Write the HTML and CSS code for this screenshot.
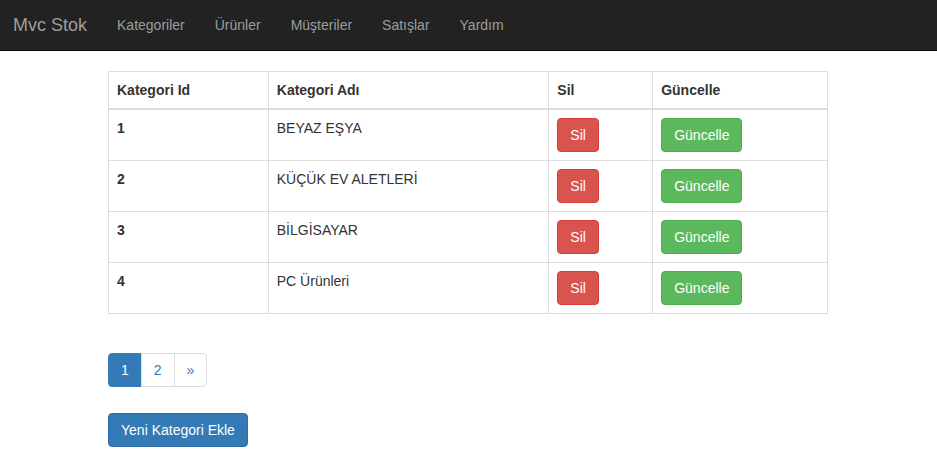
FILE: index.html
```html
<!DOCTYPE html>
<html lang="tr">
<head>
<meta charset="utf-8">
<title>Mvc Stok</title>
<link rel="stylesheet" href="styles.css">
</head>
<body>
<nav class="navbar">
  <a class="brand" href="#">Mvc Stok</a>
  <ul class="nav">
    <li><a href="#">Kategoriler</a></li>
    <li><a href="#">Ürünler</a></li>
    <li><a href="#">Müşteriler</a></li>
    <li><a href="#">Satışlar</a></li>
    <li><a href="#">Yardım</a></li>
  </ul>
</nav>
<main class="container">
  <table class="table">
    <thead>
      <tr>
        <th class="c-id">Kategori Id</th>
        <th class="c-name">Kategori Adı</th>
        <th class="c-del">Sil</th>
        <th class="c-upd">Güncelle</th>
      </tr>
    </thead>
    <tbody>
      <tr><th>1</th><td>BEYAZ EŞYA</td><td><a class="btn btn-danger" href="#">Sil</a></td><td><a class="btn btn-success" href="#">Güncelle</a></td></tr>
      <tr><th>2</th><td>KÜÇÜK EV ALETLERİ</td><td><a class="btn btn-danger" href="#">Sil</a></td><td><a class="btn btn-success" href="#">Güncelle</a></td></tr>
      <tr><th>3</th><td>BİLGİSAYAR</td><td><a class="btn btn-danger" href="#">Sil</a></td><td><a class="btn btn-success" href="#">Güncelle</a></td></tr>
      <tr><th>4</th><td>PC Ürünleri</td><td><a class="btn btn-danger" href="#">Sil</a></td><td><a class="btn btn-success" href="#">Güncelle</a></td></tr>
    </tbody>
  </table>
  <ul class="pagination">
    <li class="active"><a href="#">1</a></li>
    <li><a href="#">2</a></li>
    <li><a href="#">»</a></li>
  </ul>
  <div class="actions">
    <a class="btn btn-primary" href="#">Yeni Kategori Ekle</a>
  </div>
</main>
</body>
</html>
```
FILE: styles.css
```css
* { box-sizing: border-box; }
html, body { margin: 0; padding: 0; }
body {
  font-family: "Liberation Sans", Arial, Helvetica, sans-serif;
  font-size: 14px;
  line-height: 20px;
  color: #333;
  background: #fff;
}
a { text-decoration: none; }

.navbar {
  display: flex;
  align-items: stretch;
  height: 51px;
  background: #222;
  border-bottom: 1px solid #080808;
}
.brand {
  padding: 15px 15px 15px 13px;
  font-size: 18px;
  line-height: 20px;
  color: #9d9d9d;
}
.nav {
  display: flex;
  list-style: none;
  margin: 0;
  padding: 0;
}
.nav a {
  display: block;
  padding: 15px 15px;
  line-height: 20px;
  color: #9d9d9d;
}

.container {
  width: 751px;
  margin: 0 auto;
  padding: 20px 15px 0;
}

.table {
  width: 720px;
  border-collapse: collapse;
  border: 1px solid #ddd;
  margin-bottom: 20px;
}
.table th, .table td {
  padding: 8px;
  text-align: left;
  vertical-align: top;
  border: 1px solid #ddd;
  line-height: 20px;
}
.table thead th { border-bottom: 2px solid #ddd; font-weight: bold; }
.table tbody th { font-weight: bold; }
.c-id { width: 160px; }
.c-name { width: 281px; }
.c-del { width: 104px; }
.c-upd { width: 175px; }

.btn {
  display: inline-block;
  padding: 6px 12px;
  font-size: 14px;
  line-height: 20px;
  border: 1px solid transparent;
  border-radius: 4px;
  color: #fff;
}
.btn-danger { background: #d9534f; border-color: #d43f3a; }
.btn-success { background: #5cb85c; border-color: #4cae4c; }
.btn-primary { background: #337ab7; border-color: #2e6da4; }

.pagination {
  display: flex;
  list-style: none;
  margin: 39px 0 26px;
  padding: 0;
}
.pagination a {
  display: block;
  padding: 6px 12px;
  line-height: 20px;
  color: #337ab7;
  background: #fff;
  border: 1px solid #ddd;
  margin-left: -1px;
}
.pagination li:first-child a {
  margin-left: 0;
  border-radius: 4px 0 0 4px;
}
.pagination li:last-child a { border-radius: 0 4px 4px 0; }
.pagination .active a {
  background: #337ab7;
  border-color: #337ab7;
  color: #fff;
}
```
